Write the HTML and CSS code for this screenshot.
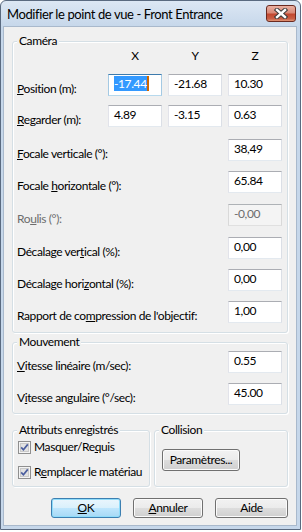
FILE: index.html
```html
<!DOCTYPE html>
<html lang="fr">
<head>
    <meta charset="UTF-8">
    <title>Modifier le point de vue</title>
    <link rel="stylesheet" href="styles.css">
</head>
<body>

    <div class="window">
        <div class="titlebar">
            <span class="title">Modifier le point de vue - Front Entrance</span>
            <span class="close">
                <svg width="14" height="11" viewBox="0 0 14 11">
                    <path d="M3 2 L11 9 M11 2 L3 9" stroke="#3a3a3a" stroke-width="4.4" stroke-linecap="square"/>
                    <path d="M3 2 L11 9 M11 2 L3 9" stroke="#ffffff" stroke-width="2.4" stroke-linecap="square"/>
                </svg>
            </span>
        </div>

        <div class="client">
            <!-- Caméra -->
            <div class="group camera">
                <span class="group-title">Caméra</span>

                <div class="row axes">
                    <span class="label"></span>
                    <span class="axis">X</span>
                    <span class="axis">Y</span>
                    <span class="axis">Z</span>
                </div>

                <div class="row first">
                    <span class="label"><u>P</u>osition (m):</span>
                    <div class="edit focus"><span class="sel">-17.44</span></div>
                    <div class="edit">-21.68</div>
                    <div class="edit">10.30</div>
                </div>

                <div class="row g9">
                    <span class="label"><u>R</u>egarder (m):</span>
                    <div class="edit">4.89</div>
                    <div class="edit">-3.15</div>
                    <div class="edit">0.63</div>
                </div>

                <div class="row g12">
                    <span class="label"><u>F</u>ocale verticale (°):</span>
                    <div class="edit">38,49</div>
                </div>

                <div class="row">
                    <span class="label">Focale <u>h</u>orizontale (°):</span>
                    <div class="edit">65.84</div>
                </div>

                <div class="row g11">
                    <span class="label disabled">Ro<u>u</u>lis (°):</span>
                    <div class="edit disabled">-0,00</div>
                </div>

                <div class="row g11">
                    <span class="label">Décalage ver<u>t</u>ical (%):</span>
                    <div class="edit">0,00</div>
                </div>

                <div class="row">
                    <span class="label">Décalage hori<u>z</u>ontal (%):</span>
                    <div class="edit">0,00</div>
                </div>

                <div class="row">
                    <span class="label">Rapport de co<u>m</u>pression de l'objectif:</span>
                    <div class="edit">1,00</div>
                </div>
            </div>

            <!-- Mouvement -->
            <div class="group movement">
                <span class="group-title">Mouvement</span>

                <div class="row first">
                    <span class="label"><u>V</u>itesse linéaire (m/sec):</span>
                    <div class="edit">0.55</div>
                </div>

                <div class="row">
                    <span class="label">V<u>i</u>tesse angulaire (°/sec):</span>
                    <div class="edit">45.00</div>
                </div>
            </div>

            <div class="bottom-groups">
                <div class="group attributes">
                    <span class="group-title">Attributs enregistrés</span>
                    <div class="check first">
                        <svg class="box" width="13" height="13" viewBox="0 0 13 13">
                            <rect x="0.5" y="0.5" width="12" height="12" fill="#f4f4f4" stroke="#8f8f8f"/>
                            <rect x="2.5" y="2.5" width="8" height="8" fill="#e2e2e2" stroke="#c9c9c9"/>
                            <path d="M3.2 6.4 L5.4 8.8 L9.8 3.4" fill="none" stroke="#4a5d9e" stroke-width="1.7"/>
                        </svg>
                        <span>Masquer/Re<u>q</u>uis</span>
                    </div>
                    <div class="check">
                        <svg class="box" width="13" height="13" viewBox="0 0 13 13">
                            <rect x="0.5" y="0.5" width="12" height="12" fill="#f4f4f4" stroke="#8f8f8f"/>
                            <rect x="2.5" y="2.5" width="8" height="8" fill="#e2e2e2" stroke="#c9c9c9"/>
                            <path d="M3.2 6.4 L5.4 8.8 L9.8 3.4" fill="none" stroke="#4a5d9e" stroke-width="1.7"/>
                        </svg>
                        <span>R<u>e</u>mplacer le matériau</span>
                    </div>
                </div>

                <div class="group collision">
                    <span class="group-title">Collision</span>
                    <button type="button" class="btn params">Paramètres...</button>
                </div>
            </div>

            <div class="buttons">
                <button type="button" class="btn default"><u>O</u>K</button>
                <button type="button" class="btn"><u>A</u>nnuler</button>
                <button type="button" class="btn help">Aide</button>
            </div>
        </div>
    </div>

</body>
</html>
```

FILE: styles.css
```css
body {
    margin: 0;
    background: #ffffff;
    font-family: Lato, "Noto Sans", sans-serif;
    font-size: 12px;
    letter-spacing: -0.4px;
    color: #000;
}
.window {
    width: 301px;
    height: 530px;
    box-sizing: border-box;
    border: 1px solid #5a6a80;
    border-radius: 6px 6px 0 0;
    background: linear-gradient(#dce7f4, #c6d7ea 26px, #c6d7ea);
    display: flex;
    flex-direction: column;
}
.titlebar {
    height: 25px;
    flex: none;
    display: flex;
    justify-content: space-between;
    align-items: flex-start;
    padding: 0 4px 0 6px;
}
.title {
    font-size: 13px;
    line-height: 26px;
    white-space: nowrap;
}
.close {
    width: 30px;
    height: 17px;
    margin-top: 4px;
    box-sizing: border-box;
    border: 1px solid #6b2a20;
    border-radius: 3px;
    background: linear-gradient(#eab0a2, #d98a78 45%, #c2472f 55%, #c95f45 85%, #e29677);
    display: flex;
    align-items: center;
    justify-content: center;
}
.client {
    flex: 1;
    margin: 0 3px 3px 2px;
    border: 1px solid #a9b9cc;
    background: #f0f0f0;
    padding: 14px 8px 0 8px;
    display: flex;
    flex-direction: column;
}
.group {
    position: relative;
    border: 1px solid #d5dfe5;
    border-radius: 3px;
    box-shadow: inset 1px 1px 0 #fff, 1px 1px 0 #fff;
    padding: 0 5px 0 4px;
}
.group-title {
    position: absolute;
    top: -9px;
    left: 4px;
    padding: 0 2px;
    background: #f0f0f0;
    line-height: 16px;
    white-space: nowrap;
}
.camera {
    padding-bottom: 9px;
}
.movement {
    margin-top: 9px;
    padding-bottom: 8px;
}
.row {
    display: flex;
    gap: 6px;
    height: 22px;
    margin-top: 10px;
}
.row.axes {
    height: 16px;
    margin-top: 6px;
}
.row.g9 {
    margin-top: 9px;
}
.row.g11 {
    margin-top: 11px;
}
.row.g12 {
    margin-top: 12px;
}
.movement .row.first {
    margin-top: 8px;
}
.label {
    flex: 1;
    min-width: 0;
    padding-top: 7px;
    line-height: 16px;
    white-space: nowrap;
}
.label.disabled {
    color: #6d6d6d;
}
.axis {
    width: 54px;
    text-align: center;
    line-height: 16px;
}
.edit {
    width: 54px;
    height: 22px;
    flex: none;
    box-sizing: border-box;
    border: 1px solid;
    border-color: #abadb3 #dbdfe6 #e3e9ef #e2e3ea;
    background: #fff;
    padding: 1px 0 0 5px;
    line-height: 16px;
}
.edit.focus {
    border-color: #3d7bad #a4c9e3 #b7d9ed #a4c9e3;
}
.edit.disabled {
    background: #f4f4f4;
    border-color: #aeb2b6 #d9d9d9 #e0e0e0 #d9d9d9;
    color: #6d6d6d;
}
.sel {
    background: #3399ff;
    color: #fff;
    border-right: 2px solid #cc6600;
}
.bottom-groups {
    display: flex;
    gap: 4px;
    margin-top: 16px;
}
.attributes {
    width: 138px;
    height: 57px;
    box-sizing: border-box;
    padding-left: 5px;
}
.collision {
    flex: 1;
    height: 57px;
    box-sizing: border-box;
    padding-left: 7px;
}
.check {
    display: flex;
    align-items: center;
    gap: 3px;
    line-height: 16px;
    margin-top: 9px;
    white-space: nowrap;
}
.check.first {
    margin-top: 8px;
}
.box {
    flex: none;
}
.btn {
    width: 70px;
    height: 20px;
    box-sizing: border-box;
    border: 1px solid #707070;
    border-radius: 3px;
    background: linear-gradient(#f2f2f2, #ebebeb 50%, #dddddd 51%, #cfcfcf);
    box-shadow: inset 0 0 0 1px #fbfbfb;
    font: inherit;
    letter-spacing: inherit;
    color: #000;
    line-height: 16px;
    padding: 0;
    text-align: center;
}
.btn.default {
    border-color: #3c7fb1;
    background: linear-gradient(#eaf6fd, #d9f0fc 50%, #bee6fd 51%, #a7d9f5);
    box-shadow: inset 0 0 0 1px #8fdcfa;
}
.btn.help {
    width: 73px;
}
.btn.params {
    width: 78px;
    height: 22px;
    margin-top: 18px;
}
.buttons {
    display: flex;
    justify-content: flex-end;
    gap: 12px;
    margin-top: 11px;
}
```
